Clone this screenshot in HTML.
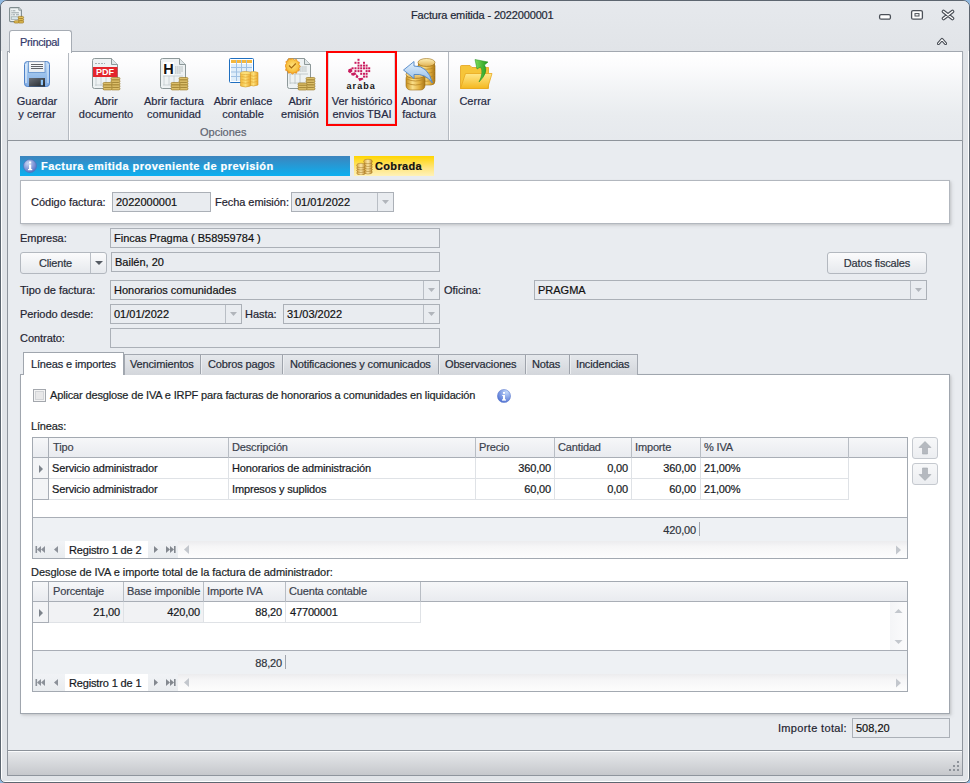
<!DOCTYPE html>
<html><head><meta charset="utf-8">
<style>
*{box-sizing:border-box;margin:0;padding:0}
html,body{width:970px;height:783px;overflow:hidden;background:#8fb8e0}
body{position:relative;font-family:"Liberation Sans",sans-serif;font-size:11px;color:#1f2329;-webkit-text-stroke:0.2px currentColor}
.a{position:absolute}
.t{position:absolute;white-space:nowrap;line-height:13px;letter-spacing:-0.15px}
.inp{position:absolute;border:1px solid #abb0b7;background:#e9ecf0}
.inp .v{position:absolute;left:3px;top:3px;white-space:nowrap;line-height:13px;color:#111}
.dd{position:absolute;top:0;bottom:0;right:0;width:16px;border-left:1px solid #b9bec5}
.dd:after{content:"";position:absolute;left:4px;top:7px;width:7px;height:4px;background:#b1b5bb;clip-path:polygon(0 0,100% 0,50% 100%)}
.btn{position:absolute;border:1px solid #b3b8bf;border-radius:3px;background:linear-gradient(#fbfbfc,#e6e9ed)}
.lbl{color:#1f2430;letter-spacing:-0.05px}
.rb{position:absolute;text-align:center;color:#262a44;line-height:13px;white-space:nowrap;padding-top:1px}
.sep{position:absolute;width:1px;background:#b4b9c0;box-shadow:1px 0 0 #fbfbfc}
.grid{position:absolute;border:1px solid #a3a9b1;background:#fff}
.gh{position:absolute;background:linear-gradient(#f6f7f9,#e9ebef);border-bottom:1px solid #a9aeb6}
.vl{position:absolute;width:1px}
.gt{color:#3b424d}
.gc{color:#15181d}
.r{text-align:right}
.hl{position:absolute;height:1px}
</style></head>
<body>
<!-- window outer border -->
<div class="a" style="left:0;top:0;width:970px;height:783px;border:1px solid #5d6670;border-radius:7px 7px 5px 5px;background:#e1e4e8;box-shadow:inset 1px 1px 0 #fff,inset -1px -1px 0 #fff"></div>
<!-- title bar -->
<div class="a" style="left:1px;top:1px;width:968px;height:50px;border-radius:6px 6px 0 0;background:linear-gradient(#e6e9ed,#e1e4e8)"></div>
<div class="t" style="left:411px;top:9px;color:#1d2736">Factura emitida - 2022000001</div>

<!-- ribbon tab -->
<div class="a" style="left:9px;top:30px;width:63px;height:23px;border:1px solid #a6acb4;border-bottom:none;border-radius:3px 3px 0 0;background:#fff;z-index:2"></div>
<div class="t" style="left:20px;top:36px;color:#343a6a;z-index:3;letter-spacing:-0.35px">Principal</div>

<!-- ribbon panel -->
<div class="a" style="left:7px;top:51px;width:956px;height:90px;border:1px solid #a2a8b0;border-bottom-color:#8e949b;background:linear-gradient(#ffffff 0%,#fcfcfd 15%,#f1f3f5 45%,#e9ecef 72%,#e6e9ed 100%);box-shadow:0 1px 1px rgba(0,0,0,0.08)"></div>


<!-- title icon -->
<svg class="a" style="left:9px;top:7px" width="16" height="18" viewBox="0 0 16 18">
<path d="M0.6 1.6Q0.6 0.6 1.6 0.6H9.8L12.4 3.2V13.8Q12.4 14.6 11.6 14.6H1.6Q0.6 14.6 0.6 13.6Z" fill="#eef3f3" stroke="#7f8c8e" stroke-width="1.1"/>
<path d="M9.8 0.6V3.2H12.4" fill="#d8e0e2" stroke="#7f8c8e" stroke-width="0.8"/>
<path d="M2.3 3.8h1M3.8 3.8h2.6M2.3 5.8h7.6M2.3 7.8h1M3.8 7.8h2.2M7 7.8h3" stroke="#8d999c" stroke-width="0.9"/>
<rect x="2.2" y="9.8" width="7.2" height="2.6" fill="#d8e6ea" stroke="#8d999c" stroke-width="0.6"/>
<g fill="#e2c05a" stroke="#9c7418" stroke-width="0.7"><rect x="9.2" y="9.4" width="5.4" height="2.2" rx="1.1"/><rect x="9.2" y="11.6" width="5.4" height="2.2" rx="1.1"/><rect x="9.2" y="13.8" width="5.4" height="2.2" rx="1.1"/><rect x="5" y="13.8" width="5" height="2.2" rx="1.1"/></g>
</svg>
<!-- window buttons -->
<svg class="a" style="left:878px;top:13px" width="14" height="8" viewBox="0 0 14 8"><rect x="1.6" y="1.6" width="10.8" height="4.6" rx="1.5" fill="#fff" stroke="#4b5058" stroke-width="1.3"/></svg>
<svg class="a" style="left:910px;top:9px" width="14" height="12" viewBox="0 0 14 12"><rect x="1.6" y="1.6" width="10.8" height="8.6" rx="1.5" fill="#fff" stroke="#4b5058" stroke-width="1.3"/><rect x="5" y="4.6" width="4" height="2.4" fill="#fff" stroke="#4b5058" stroke-width="1"/></svg>
<svg class="a" style="left:941px;top:9px" width="14" height="12" viewBox="0 0 14 12"><path d="M2.5 2.5L11.5 9.5M11.5 2.5L2.5 9.5" stroke="#4b5058" stroke-width="3.6" stroke-linecap="round"/><path d="M2.5 2.5L11.5 9.5M11.5 2.5L2.5 9.5" stroke="#fff" stroke-width="1.4" stroke-linecap="round"/></svg>
<svg class="a" style="left:937px;top:37px" width="10" height="8" viewBox="0 0 10 8"><path d="M1.5 6.5L5 2.5L8.5 6.5" fill="none" stroke="#4b5058" stroke-width="3.2" stroke-linejoin="round" stroke-linecap="round"/><path d="M1.5 6.5L5 2.5L8.5 6.5" fill="none" stroke="#fff" stroke-width="1.1" stroke-linecap="round"/></svg>

<!-- ribbon separators -->
<div class="sep" style="left:68px;top:52px;height:88px"></div>
<div class="sep" style="left:448px;top:52px;height:88px"></div>

<!-- save icon -->
<svg class="a" style="left:24px;top:61px" width="27" height="27" viewBox="0 0 27 27">
<defs><linearGradient id="gs" x1="0" x2="0" y1="0" y2="1"><stop offset="0" stop-color="#c4dcf6"/><stop offset="0.5" stop-color="#9cc2ec"/><stop offset="1" stop-color="#80ace4"/></linearGradient>
<linearGradient id="gd" x1="0" x2="1" y1="0" y2="1"><stop offset="0" stop-color="#6a717a"/><stop offset="1" stop-color="#22262b"/></linearGradient>
<linearGradient id="gl" x1="0" x2="0" y1="0" y2="1"><stop offset="0" stop-color="#ffffff"/><stop offset="1" stop-color="#e4eaf0"/></linearGradient></defs>
<rect x="0.5" y="0.5" width="25" height="25" rx="3" fill="url(#gs)" stroke="#4f82c8"/>
<path d="M2 3v19" stroke="#e8f2fc" stroke-width="1.2"/><path d="M24 3v19" stroke="#d8e8f8" stroke-width="1"/>
<rect x="4.5" y="0.5" width="16.5" height="11" fill="url(#gl)" stroke="#5f8fcc" stroke-width="0.8"/>
<path d="M4.6 0.7h16.3" stroke="#9a9ea4" stroke-width="0.8"/>
<path d="M7 3.5h12M7 5.5h12M7 7.5h12" stroke="#505459" stroke-width="0.9"/>
<rect x="5" y="17" width="16" height="8.6" fill="url(#gd)"/>
<rect x="16.8" y="18.8" width="2.2" height="5.4" fill="#8ec4f6"/>
</svg>
<div class="rb" style="left:7px;top:94px;width:60px">Guardar<br>y cerrar</div>

<!-- pdf icon -->
<svg class="a" style="left:92px;top:58px" width="29" height="33" viewBox="0 0 29 33">
<path d="M0.5 2.5Q0.5 0.5 2.5 0.5H19.5L25.5 6.5V28.5Q25.5 30.5 23.5 30.5H2.5Q0.5 30.5 0.5 28.5Z" fill="#eef2f3" stroke="#8d9899"/>
<path d="M19.5 0.5V6.5H25.5" fill="#dfe6e8" stroke="#8d9899"/>
<path d="M3 5.5h10" stroke="#a8b1b3" stroke-dasharray="2 1"/>
<rect x="1" y="9" width="24.5" height="10" fill="#e4252b"/>
<text x="13" y="17.3" font-family="Liberation Sans" font-weight="bold" font-size="9" fill="#fff" text-anchor="middle">PDF</text>
<path d="M4 19v9M9 19v9M14 19v9M3 27h20" stroke="#c3ccce" stroke-width="0.8"/>
<g fill="#dcbf6a" stroke="#9a7a2a" stroke-width="0.7"><rect x="19" y="19.5" width="9" height="2.4" rx="1.2"/><rect x="19" y="22" width="9" height="2.4" rx="1.2"/><rect x="19" y="24.5" width="9" height="2.4" rx="1.2"/><rect x="19" y="27" width="9" height="2.4" rx="1.2"/><rect x="19" y="29.5" width="9" height="2.4" rx="1.2"/><rect x="11" y="24.5" width="9" height="2.4" rx="1.2"/><rect x="11" y="27" width="9" height="2.4" rx="1.2"/><rect x="11" y="29.5" width="9" height="2.4" rx="1.2"/></g>
</svg>
<div class="rb" style="left:76px;top:94px;width:60px">Abrir<br>documento</div>

<!-- H icon -->
<svg class="a" style="left:160px;top:58px" width="29" height="33" viewBox="0 0 29 33">
<path d="M0.5 2.5Q0.5 0.5 2.5 0.5H19.5L25.5 6.5V28.5Q25.5 30.5 23.5 30.5H2.5Q0.5 30.5 0.5 28.5Z" fill="#eef2f3" stroke="#8d9899"/>
<path d="M19.5 0.5V6.5H25.5" fill="#dfe6e8" stroke="#8d9899"/>
<rect x="3" y="4" width="11" height="13" fill="#fff"/>
<text x="8.5" y="16" font-family="Liberation Sans" font-weight="bold" font-size="14.5" fill="#111" text-anchor="middle">H</text>
<path d="M15 9h8M15 11h8M15 13h8M15 15h6" stroke="#9aa4a6" stroke-width="0.8" stroke-dasharray="1.5 0.6"/>
<path d="M3 18h20M4 18v9M9 18v9M14 18v9M3 27h18" stroke="#c3ccce" stroke-width="0.8"/>
<g fill="#dcbf6a" stroke="#9a7a2a" stroke-width="0.7"><rect x="19" y="19.5" width="9" height="2.4" rx="1.2"/><rect x="19" y="22" width="9" height="2.4" rx="1.2"/><rect x="19" y="24.5" width="9" height="2.4" rx="1.2"/><rect x="19" y="27" width="9" height="2.4" rx="1.2"/><rect x="19" y="29.5" width="9" height="2.4" rx="1.2"/><rect x="11" y="24.5" width="9" height="2.4" rx="1.2"/><rect x="11" y="27" width="9" height="2.4" rx="1.2"/><rect x="11" y="29.5" width="9" height="2.4" rx="1.2"/></g>
</svg>
<div class="rb" style="left:139px;top:94px;width:70px">Abrir factura<br>comunidad</div>

<!-- table icon -->
<svg class="a" style="left:229px;top:58px" width="31" height="31" viewBox="0 0 31 31">
<rect x="0.5" y="0.5" width="24" height="24" rx="1" fill="#fff" stroke="#1f6fc0"/>
<rect x="2" y="2" width="21" height="3" fill="#f4b73c"/>
<path d="M2 6h21v17H2z" fill="#dfeefa"/>
<path d="M2 9.5h21M2 14h21M2 18.5h21M7.5 2v21M12.5 2v21M17.5 2v21" stroke="#9fc1e3" stroke-width="1"/>
<defs><linearGradient id="gc" x1="0" x2="1"><stop offset="0" stop-color="#f0b838"/><stop offset="0.5" stop-color="#fde07a"/><stop offset="1" stop-color="#e9a72c"/></linearGradient></defs>
<path d="M20 14.5Q24.5 12.5 29 14.5V27Q24.5 29 20 27Z" fill="url(#gc)" stroke="#d29a2a" stroke-width="0.6"/>
<path d="M21 17.5Q24.5 19 28 17.5M21 20.5Q24.5 22 28 20.5M21 23.5Q24.5 25 28 23.5" fill="none" stroke="#e4a730" stroke-width="0.7"/>
<path d="M11.5 15Q16.5 13 21.5 15V28Q16.5 30 11.5 28Z" fill="url(#gc)" stroke="#d29a2a" stroke-width="0.6"/>
<ellipse cx="16.5" cy="15" rx="5" ry="1.6" fill="#fde07a" stroke="#d29a2a" stroke-width="0.5"/>
<path d="M12.5 18.5Q16.5 20 20.5 18.5M12.5 21.5Q16.5 23 20.5 21.5M12.5 24.5Q16.5 26 20.5 24.5" fill="none" stroke="#e4a730" stroke-width="0.7"/>
</svg>
<div class="rb" style="left:208px;top:94px;width:70px">Abrir enlace<br>contable</div>

<!-- seal doc icon -->
<svg class="a" style="left:285px;top:58px" width="31" height="33" viewBox="0 0 31 33">
<path d="M2.5 2.5Q2.5 0.5 4.5 0.5H19.5L25.5 6.5V28.5Q25.5 30.5 23.5 30.5H4.5Q2.5 30.5 2.5 28.5Z" fill="#eef2f3" stroke="#8d9899"/>
<path d="M19.5 0.5V6.5H25.5" fill="#dfe6e8" stroke="#8d9899"/>
<path d="M13 9h9M13 11h9M13 13h9" stroke="#9aa4a6" stroke-width="0.8" stroke-dasharray="1.5 0.6"/>
<path d="M5 16h18M5 16v10M10 16v10M15 16v10M5 25h15" stroke="#b8c1c3" stroke-width="0.8"/>
<defs><radialGradient id="gse" cx="0.5" cy="0.45" r="0.55"><stop offset="0" stop-color="#ffe27a"/><stop offset="0.7" stop-color="#f8c040"/><stop offset="1" stop-color="#ee9a18"/></radialGradient></defs><path d="M7.5 0.5l1.8 1.4 2.2-.5.8 2.1 2.1.8-.5 2.2 1.4 1.8-1.4 1.8.5 2.2-2.1.8-.8 2.1-2.2-.5-1.8 1.4-1.8-1.4-2.2.5-.8-2.1-2.1-.8.5-2.2L0 7.5l1.4-1.8-.5-2.2 2.1-.8.8-2.1 2.2.5z" fill="url(#gse)" stroke="#e88a10" stroke-width="0.7"/>
<path d="M4 7.5l2.4 2.4 4.4-4.4" fill="none" stroke="#a86a10" stroke-width="1.1"/>
<g fill="#dcbf6a" stroke="#9a7a2a" stroke-width="0.7"><rect x="21" y="19.5" width="9" height="2.4" rx="1.2"/><rect x="21" y="22" width="9" height="2.4" rx="1.2"/><rect x="21" y="24.5" width="9" height="2.4" rx="1.2"/><rect x="21" y="27" width="9" height="2.4" rx="1.2"/><rect x="21" y="29.5" width="9" height="2.4" rx="1.2"/><rect x="13" y="25" width="9" height="2.4" rx="1.2"/><rect x="13" y="27.3" width="9" height="2.4" rx="1.2"/><rect x="13" y="29.6" width="9" height="2.4" rx="1.2"/></g>
</svg>
<div class="rb" style="left:270px;top:94px;width:60px">Abrir<br>emisión</div>

<!-- TBAI red box -->
<div class="a" style="left:326px;top:51px;width:71px;height:75px;border:2px solid #ff0000"></div>
<div class="a" style="left:328px;top:53px;width:67px;height:71px;border:1px solid #d4d8dd;border-top:none"></div>

<svg class="a" style="left:340px;top:56px" width="40" height="36" viewBox="0 0 40 36">
<g fill="#c91c5e" transform="translate(-1,0.8)">
<rect x="18.5" y="2" width="2" height="2"/>
<rect x="15.5" y="5" width="2" height="2"/><rect x="18.5" y="5" width="2" height="2"/><rect x="24" y="5" width="2" height="2"/>
<rect x="18.5" y="7.8" width="2" height="2"/><rect x="21.2" y="7.8" width="2" height="2"/><rect x="24" y="7.8" width="2" height="2"/><rect x="26.6" y="7.8" width="2" height="2"/>
<rect x="12.6" y="10.5" width="2" height="2"/><rect x="15.5" y="10.5" width="2" height="2"/><rect x="18.5" y="10.5" width="2" height="2"/><rect x="21.2" y="10.5" width="2" height="2"/><rect x="24" y="10.5" width="2" height="2"/><rect x="26.6" y="10.5" width="2" height="2"/><rect x="29.2" y="10.5" width="2" height="2"/>
<rect x="15.5" y="13.3" width="2" height="2"/><rect x="18.5" y="13.3" width="2" height="2"/><rect x="21.2" y="13.3" width="2" height="2"/><rect x="26.6" y="13.3" width="2" height="2"/><rect x="29.2" y="13.3" width="2" height="2"/>
<rect x="21.2" y="16" width="2" height="2"/><rect x="24" y="16" width="2" height="2"/><rect x="26.6" y="16" width="2" height="2"/>
<rect x="24" y="18.8" width="2" height="2"/><rect x="26.6" y="18.8" width="2" height="2"/>
<path d="M9.5 12.5L12.5 11.5L13.5 14.5L11 16.5L9 15Z"/>
<path d="M12 16.5L16 15.5L17.5 17.5L14.5 19L12.5 18.5Z"/>
<path d="M17.5 17.5L19.5 19.5L18.5 21.5L16.5 20.5Z"/>
<path d="M19 21.5L23.5 21L24.5 22.5L20.5 24.5Z"/>
</g>
<text x="21.2" y="33" font-family="Liberation Sans" font-weight="bold" font-size="9" fill="#151515" text-anchor="middle" letter-spacing="1.1">araba</text>
</svg>
<div class="rb" style="left:328px;top:94px;width:68px">Ver histórico<br>envios TBAI</div>

<!-- abonar icon -->
<svg class="a" style="left:403px;top:57px" width="34" height="34" viewBox="0 0 34 34">
<defs><linearGradient id="gg" x1="0" x2="1" y1="0" y2="0"><stop offset="0" stop-color="#c8901c"/><stop offset="0.35" stop-color="#fbe08a"/><stop offset="0.7" stop-color="#e2b040"/><stop offset="1" stop-color="#a87414"/></linearGradient>
<linearGradient id="gt" x1="0" x2="0" y1="0" y2="1"><stop offset="0" stop-color="#fff2b8"/><stop offset="1" stop-color="#e0b050"/></linearGradient>
<linearGradient id="ga" x1="0" x2="0" y1="0" y2="1"><stop offset="0" stop-color="#e6f2fd"/><stop offset="1" stop-color="#8ab8e8"/></linearGradient></defs>
<g stroke="#9a6c14" stroke-width="0.6">
<rect x="15" y="5" width="17" height="23" rx="4" fill="url(#gg)"/>
<ellipse cx="23.5" cy="5.5" rx="8.5" ry="4" fill="url(#gt)"/>
<path d="M15.5 10.5Q23.5 14 31.5 10.5M15.5 14.5Q23.5 18 31.5 14.5M15.5 18.5Q23.5 22 31.5 18.5M15.5 22.5Q23.5 26 31.5 22.5" fill="none" stroke="#b78628" stroke-width="0.8"/>
<rect x="3" y="17" width="19" height="16" rx="4.5" fill="url(#gg)"/>
<ellipse cx="12.5" cy="17.5" rx="9.5" ry="4" fill="url(#gt)"/>
<path d="M3.5 22Q12.5 26 21.5 22M3.5 26Q12.5 30 21.5 26" fill="none" stroke="#b78628" stroke-width="0.8"/>
</g>
<path d="M0.5 13L11 4.5V9Q25 8.5 29.5 26Q22 16 11 17.5V21.5Z" fill="url(#ga)" stroke="#4f86c6" stroke-width="0.9" stroke-linejoin="round"/>
</svg>
<div class="rb" style="left:389px;top:94px;width:60px">Abonar<br>factura</div>

<!-- cerrar icon -->
<svg class="a" style="left:460px;top:58px" width="33" height="33" viewBox="0 0 33 33">
<defs><linearGradient id="gf" x1="0" x2="0" y1="0" y2="1"><stop offset="0" stop-color="#ffe88a"/><stop offset="1" stop-color="#f4b820"/></linearGradient>
<linearGradient id="gr" x1="0" x2="1"><stop offset="0" stop-color="#7fdc5a"/><stop offset="1" stop-color="#1e9a1e"/></linearGradient></defs>
<path d="M0.5 8.5Q0.5 7.5 1.5 7.5H10L12 9.5H28.5V30.5H0.5Z" fill="#f6c53a" stroke="#e5a21a" stroke-width="0.8"/>
<path d="M0.5 30.5L5.5 15.5H32L27.5 30.5Z" fill="url(#gf)" stroke="#e8a81e" stroke-width="0.8"/>
<path d="M15 1.5L28 4L24.5 7Q29 14 19 24Q24 14 20.5 9L17 11Z" fill="url(#gr)" stroke="#1a8a1a" stroke-width="0.5"/>
</svg>
<div class="rb" style="left:445px;top:94px;width:60px">Cerrar</div>

<div class="rb" style="left:200px;top:125px;width:46px;color:#5e6470">Opciones</div>

<!-- content area -->
<div class="a" style="left:7px;top:141px;width:956px;height:635px;border:1px solid #8f959d;border-top:none;background:#e9ecf0"></div>

<!-- status bar -->
<div class="a" style="left:8px;top:750px;width:954px;height:25px;border-top:1px solid #8c929a;background:linear-gradient(#e6e8eb,#c6c8cc);box-shadow:inset 0 1px 0 #fafbfc"></div>
<!-- info bar -->
<div class="a" style="left:20px;top:156px;width:330px;height:20px;background:linear-gradient(#3d84bd,#0cb0f0)"></div>
<svg class="a" style="left:23px;top:159px" width="14" height="14" viewBox="0 0 14 14"><defs><radialGradient id="gi" cx="0.35" cy="0.3" r="0.8"><stop offset="0" stop-color="#c9d6f5"/><stop offset="1" stop-color="#4c68c0"/></radialGradient></defs><circle cx="7" cy="7" r="6.5" fill="url(#gi)" stroke="#5670b8" stroke-width="0.6"/><rect x="6" y="5.5" width="2.2" height="5.5" fill="#fff"/><rect x="6" y="2.5" width="2.2" height="2" fill="#fff"/><rect x="5" y="10" width="4.2" height="1.2" fill="#fff"/></svg>
<div class="t" style="left:41px;top:160px;font-size:11px;font-weight:bold;color:#fff;letter-spacing:0.45px">Factura emitida proveniente de previsión</div>
<div class="a" style="left:354px;top:156px;width:80px;height:20px;background:linear-gradient(#ffd500,#ffe680 60%,#fff2b8)"></div>
<svg class="a" style="left:356px;top:158px" width="17" height="17" viewBox="0 0 17 17"><defs><linearGradient id="gk" x1="0" x2="1"><stop offset="0" stop-color="#d9a640"/><stop offset="0.5" stop-color="#fbe6a8"/><stop offset="1" stop-color="#c08a2a"/></linearGradient></defs>
<g fill="url(#gk)" stroke="#9c7020" stroke-width="0.5"><ellipse cx="12" cy="14" rx="4.3" ry="2"/><ellipse cx="12" cy="11.5" rx="4.3" ry="2"/><ellipse cx="12" cy="9" rx="4.3" ry="2"/><ellipse cx="12" cy="6.5" rx="4.3" ry="2"/><ellipse cx="12" cy="3.5" rx="4.3" ry="2.2"/><ellipse cx="5" cy="15" rx="4.3" ry="2"/><ellipse cx="5" cy="12.5" rx="4.3" ry="2"/><ellipse cx="5" cy="10" rx="4.3" ry="2"/><ellipse cx="5" cy="7.5" rx="4.3" ry="2.2"/></g></svg>
<div class="t" style="left:375px;top:160px;font-size:11px;font-weight:bold;color:#111;letter-spacing:0.35px">Cobrada</div>

<!-- white box -->
<div class="a" style="left:20px;top:180px;width:930px;height:44px;border:1px solid #b2b7be;background:#fff;box-shadow:1px 1px 2px rgba(0,0,0,0.1),2px 2px 4px rgba(0,0,0,0.08)"></div>
<div class="t lbl" style="left:31px;top:196px;letter-spacing:0">Código factura:</div>
<div class="inp" style="left:112px;top:192px;width:99px;height:20px"><span class="v">2022000001</span></div>
<div class="t lbl" style="left:215px;top:196px">Fecha emisión:</div>
<div class="inp" style="left:291px;top:192px;width:103px;height:20px"><span class="v">01/01/2022</span><div class="dd"></div></div>

<!-- form rows -->
<div class="t lbl" style="left:20px;top:232px">Empresa:</div>
<div class="inp" style="left:110px;top:228px;width:330px;height:20px"><span class="v">Fincas Pragma ( B58959784 )</span></div>

<div class="btn" style="left:20px;top:252px;width:87px;height:22px"><div class="t" style="left:0;width:69px;top:4px;text-align:center;color:#2e3440">Cliente</div><div class="a" style="left:69px;top:0;bottom:0;width:1px;background:#b9bec5"></div><div class="a" style="left:74px;top:8px;border-left:4px solid transparent;border-right:4px solid transparent;border-top:4px solid #555b63"></div></div>
<div class="inp" style="left:111px;top:252px;width:329px;height:20px"><span class="v">Bailén, 20</span></div>
<div class="btn" style="left:827px;top:252px;width:100px;height:22px"><div class="t" style="left:0;width:98px;top:4px;text-align:center;color:#2e3440">Datos fiscales</div></div>

<div class="t lbl" style="left:20px;top:284px">Tipo de factura:</div>
<div class="inp" style="left:110px;top:280px;width:330px;height:20px"><span class="v">Honorarios comunidades</span><div class="dd"></div></div>
<div class="t lbl" style="left:444px;top:284px">Oficina:</div>
<div class="inp" style="left:534px;top:280px;width:393px;height:20px"><span class="v">PRAGMA</span><div class="dd"></div></div>

<div class="t lbl" style="left:20px;top:308px">Periodo desde:</div>
<div class="inp" style="left:110px;top:304px;width:132px;height:20px"><span class="v">01/01/2022</span><div class="dd"></div></div>
<div class="t lbl" style="left:245px;top:308px">Hasta:</div>
<div class="inp" style="left:283px;top:304px;width:157px;height:20px"><span class="v">31/03/2022</span><div class="dd"></div></div>

<div class="t lbl" style="left:20px;top:332px">Contrato:</div>
<div class="inp" style="left:110px;top:328px;width:330px;height:20px"></div>


<!-- tabs -->
<div class="a" style="left:20px;top:374px;width:930px;height:340px;border:1px solid #a0a6ae;background:#fff;box-shadow:1px 1px 2px rgba(0,0,0,0.1),2px 2px 4px rgba(0,0,0,0.08)"></div>
<div class="a" style="left:124px;top:354px;width:514px;height:21px;border:1px solid #a3a8b0;border-bottom:none;background:linear-gradient(#e5e8ec,#d3d6db)"></div>
<div class="vl" style="left:200px;top:355px;height:19px;background:#9ea3ab;box-shadow:1px 0 0 #eceef1"></div>
<div class="vl" style="left:282px;top:355px;height:19px;background:#9ea3ab;box-shadow:1px 0 0 #eceef1"></div>
<div class="vl" style="left:438px;top:355px;height:19px;background:#9ea3ab;box-shadow:1px 0 0 #eceef1"></div>
<div class="vl" style="left:525px;top:355px;height:19px;background:#9ea3ab;box-shadow:1px 0 0 #eceef1"></div>
<div class="vl" style="left:569px;top:355px;height:19px;background:#9ea3ab;box-shadow:1px 0 0 #eceef1"></div>
<div class="a" style="left:23px;top:352px;width:101px;height:23px;border:1px solid #a0a6ae;border-bottom:none;background:#fff"></div>
<div class="t" style="left:31px;top:358px;color:#222834">Líneas e importes</div>
<div class="t" style="left:130px;top:358px;color:#262c38">Vencimientos</div>
<div class="t" style="left:208px;top:358px;color:#262c38">Cobros pagos</div>
<div class="t" style="left:290px;top:358px;color:#262c38">Notificaciones y comunicados</div>
<div class="t" style="left:445px;top:358px;color:#262c38">Observaciones</div>
<div class="t" style="left:532px;top:358px;color:#262c38">Notas</div>
<div class="t" style="left:576px;top:358px;color:#262c38">Incidencias</div>

<!-- checkbox -->
<div class="a" style="left:33px;top:389px;width:13px;height:13px;border:1px solid #a3a7ad;background:#f4f4f4"><div class="a" style="left:1px;top:1px;width:9px;height:9px;border:1px solid #d2d4d7;background:#e8e8e9"></div></div>
<div class="t" style="left:50px;top:389px;color:#1b1f27">Aplicar desglose de IVA e IRPF para facturas de honorarios a comunidades en liquidación</div>
<svg class="a" style="left:497px;top:389px" width="14" height="14" viewBox="0 0 14 14"><defs><radialGradient id="gi2" cx="0.7" cy="0.2" r="0.9"><stop offset="0" stop-color="#c2d8fb"/><stop offset="1" stop-color="#4a6cd0"/></radialGradient></defs><circle cx="7" cy="7" r="6.6" fill="url(#gi2)" stroke="#5a78cc" stroke-width="0.5"/><rect x="6" y="6" width="2" height="5" fill="#fff"/><rect x="6" y="3" width="2" height="1.8" fill="#fff"/><rect x="5" y="10.3" width="4" height="1.3" fill="#fff"/><rect x="5.2" y="6" width="1" height="1" fill="#fff"/></svg>

<div class="t" style="left:31px;top:420px;color:#1b1f27">Líneas:</div>

<!-- grid 1 -->
<div class="grid" style="left:32px;top:437px;width:876px;height:122px"></div>
<div class="gh" style="left:33px;top:438px;width:874px;height:20px"></div>
<div class="a" style="left:33px;top:458px;width:15px;height:42px;background:#f3f4f6"></div>
<div class="vl" style="left:48px;top:438px;height:62px;background:#a9aeb6"></div>
<div class="hl" style="left:33px;top:478px;width:15px;background:#a9aeb6"></div>
<div class="hl" style="left:33px;top:499px;width:15px;background:#a9aeb6"></div>
<div class="hl" style="left:49px;top:478px;width:800px;background:#dfe2e6"></div>
<div class="hl" style="left:49px;top:499px;width:800px;background:#dfe2e6"></div>
<div class="vl" style="left:228px;top:438px;height:20px;background:#b8bdc4"></div>
<div class="vl" style="left:475px;top:438px;height:20px;background:#b8bdc4"></div>
<div class="vl" style="left:554px;top:438px;height:20px;background:#b8bdc4"></div>
<div class="vl" style="left:631px;top:438px;height:20px;background:#b8bdc4"></div>
<div class="vl" style="left:700px;top:438px;height:20px;background:#b8bdc4"></div>
<div class="vl" style="left:848px;top:438px;height:20px;background:#b8bdc4"></div>
<div class="vl" style="left:228px;top:458px;height:42px;background:#dfe2e6"></div>
<div class="vl" style="left:475px;top:458px;height:42px;background:#dfe2e6"></div>
<div class="vl" style="left:554px;top:458px;height:42px;background:#dfe2e6"></div>
<div class="vl" style="left:631px;top:458px;height:42px;background:#dfe2e6"></div>
<div class="vl" style="left:700px;top:458px;height:42px;background:#dfe2e6"></div>
<div class="vl" style="left:848px;top:458px;height:42px;background:#dfe2e6"></div>
<div class="a" style="left:39px;top:465px;border-top:4px solid transparent;border-bottom:4px solid transparent;border-left:4px solid #7d838b"></div>
<div class="t gt" style="left:53px;top:441px">Tipo</div>
<div class="t gt" style="left:232px;top:441px">Descripción</div>
<div class="t gt" style="left:479px;top:441px">Precio</div>
<div class="t gt" style="left:558px;top:441px">Cantidad</div>
<div class="t gt" style="left:635px;top:441px">Importe</div>
<div class="t gt" style="left:704px;top:441px">% IVA</div>
<div class="t gc" style="left:52px;top:462px">Servicio administrador</div>
<div class="t gc" style="left:232px;top:462px">Honorarios de administración</div>
<div class="t gc r" style="left:475px;width:76px;top:462px">360,00</div>
<div class="t gc r" style="left:554px;width:74px;top:462px">0,00</div>
<div class="t gc r" style="left:631px;width:65px;top:462px">360,00</div>
<div class="t gc" style="left:704px;top:462px">21,00%</div>
<div class="t gc" style="left:52px;top:483px">Servicio administrador</div>
<div class="t gc" style="left:232px;top:483px">Impresos y suplidos</div>
<div class="t gc r" style="left:475px;width:76px;top:483px">60,00</div>
<div class="t gc r" style="left:554px;width:74px;top:483px">0,00</div>
<div class="t gc r" style="left:631px;width:65px;top:483px">60,00</div>
<div class="t gc" style="left:704px;top:483px">21,00%</div>
<!-- footer -->
<div class="a" style="left:33px;top:517px;width:874px;height:24px;border-top:1px solid #a9aeb6;background:#eef1f4"></div>
<div class="a" style="left:33px;top:541px;width:874px;height:17px;background:linear-gradient(#ececee,#f6f6f7 35%,#fdfdfd)"></div>
<div class="t gc r" style="left:600px;width:96px;top:524px;color:#2f343c">420,00</div>
<div class="vl" style="left:699px;top:522px;height:14px;background:#a0a5ad"></div>
<div class="a" style="left:33px;top:541px;width:32px;height:17px;background:linear-gradient(#f1f3f6,#e9ecef)"></div>
<div class="a" style="left:148px;top:541px;width:30px;height:17px;background:linear-gradient(#f1f3f6,#e9ecef)"></div>
<div class="a" style="left:65px;top:541px;width:83px;height:17px;background:#fff"></div>
<div class="t gc" style="left:69px;top:544px">Registro 1 de 2</div>
<svg class="a" style="overflow:visible;left:35px;top:546px" width="160" height="8" viewBox="0 0 160 8">
<g fill="#8c9199"><rect x="0.5" y="0" width="1.6" height="7"/><path d="M2 3.5L6 0V7Z"/><path d="M6 3.5L10 0V7Z"/>
<path d="M19 3.5L23 0V7Z"/></g>
<g fill="#83888f"><path d="M119 0L123 3.5L119 7Z"/><path d="M131 0L135 3.5L131 7Z"/><path d="M135 0L139 3.5L135 7Z"/><rect x="139" y="0" width="1.6" height="7"/></g>
<path d="M149 3.5L154 -1V8Z" fill="#c3c7cd"/>
</svg>
<svg class="a" style="left:895px;top:545px" width="7" height="10" viewBox="0 0 7 10"><path d="M1 0.5L6 5L1 9.5Z" fill="#c3c7cd"/></svg>
<!-- up/down buttons -->
<div class="btn" style="left:912px;top:437px;width:26px;height:22px;border-color:#c5c9cf;background:linear-gradient(#f7f8f9,#eceef1)"></div>
<svg class="a" style="left:918px;top:441px" width="14" height="14" viewBox="0 0 14 14"><path d="M7 0.5L13 6.5H9.5V13H4.5V6.5H1Z" fill="#b5b9bf" stroke="#a3a8ae" stroke-width="0.6"/></svg>
<div class="btn" style="left:912px;top:463px;width:26px;height:22px;border-color:#c5c9cf;background:linear-gradient(#f7f8f9,#eceef1)"></div>
<svg class="a" style="left:918px;top:467px" width="14" height="14" viewBox="0 0 14 14"><path d="M7 13.5L13 7.5H9.5V1H4.5V7.5H1Z" fill="#b5b9bf" stroke="#a3a8ae" stroke-width="0.6"/></svg>

<div class="t" style="left:31px;top:566px;color:#1b1f27;letter-spacing:-0.05px">Desglose de IVA e importe total de la factura de administrador:</div>
<!-- grid 2 -->
<div class="grid" style="left:32px;top:581px;width:876px;height:111px"></div>
<div class="gh" style="left:33px;top:582px;width:874px;height:20px"></div>
<div class="a" style="left:33px;top:602px;width:15px;height:21px;background:#f3f4f6"></div>
<div class="a" style="left:49px;top:602px;width:154px;height:20px;background:#f1f2f4"></div>
<div class="vl" style="left:48px;top:582px;height:41px;background:#a9aeb6"></div>
<div class="hl" style="left:33px;top:622px;width:15px;background:#a9aeb6"></div>
<div class="hl" style="left:49px;top:622px;width:372px;background:#dfe2e6"></div>
<div class="vl" style="left:123px;top:582px;height:20px;background:#b8bdc4"></div>
<div class="vl" style="left:203px;top:582px;height:20px;background:#b8bdc4"></div>
<div class="vl" style="left:285px;top:582px;height:20px;background:#b8bdc4"></div>
<div class="vl" style="left:420px;top:582px;height:20px;background:#b8bdc4"></div>
<div class="vl" style="left:123px;top:602px;height:20px;background:#dfe2e6"></div>
<div class="vl" style="left:203px;top:602px;height:20px;background:#dfe2e6"></div>
<div class="vl" style="left:285px;top:602px;height:20px;background:#dfe2e6"></div>
<div class="vl" style="left:420px;top:602px;height:20px;background:#dfe2e6"></div>
<div class="a" style="left:39px;top:609px;border-top:4px solid transparent;border-bottom:4px solid transparent;border-left:4px solid #7d838b"></div>
<div class="t gt" style="left:53px;top:585px">Porcentaje</div>
<div class="t gt" style="left:127px;top:585px">Base imponible</div>
<div class="t gt" style="left:207px;top:585px">Importe IVA</div>
<div class="t gt" style="left:289px;top:585px">Cuenta contable</div>
<div class="t gc r" style="left:48px;width:72px;top:606px">21,00</div>
<div class="t gc r" style="left:123px;width:77px;top:606px">420,00</div>
<div class="t gc r" style="left:203px;width:79px;top:606px">88,20</div>
<div class="t gc" style="left:290px;top:606px">47700001</div>
<!-- vscroll -->
<div class="a" style="left:890px;top:602px;width:17px;height:48px;background:linear-gradient(90deg,#f4f5f7,#fbfbfc)"></div>
<svg class="a" style="left:894px;top:608px" width="9" height="6" viewBox="0 0 9 6"><path d="M0.5 5L4.5 1L8.5 5Z" fill="#c3c7cd"/></svg>
<svg class="a" style="left:894px;top:639px" width="9" height="6" viewBox="0 0 9 6"><path d="M0.5 1L4.5 5L8.5 1Z" fill="#c3c7cd"/></svg>
<!-- footer 2 -->
<div class="a" style="left:33px;top:650px;width:874px;height:24px;border-top:1px solid #a9aeb6;background:#eef1f4"></div>
<div class="a" style="left:33px;top:674px;width:874px;height:17px;background:linear-gradient(#ececee,#f6f6f7 35%,#fdfdfd)"></div>
<div class="t gc r" style="left:200px;width:82px;top:657px;color:#2f343c">88,20</div>
<div class="vl" style="left:285px;top:655px;height:14px;background:#a0a5ad"></div>
<div class="a" style="left:33px;top:674px;width:32px;height:17px;background:linear-gradient(#f1f3f6,#e9ecef)"></div>
<div class="a" style="left:148px;top:674px;width:30px;height:17px;background:linear-gradient(#f1f3f6,#e9ecef)"></div>
<div class="a" style="left:65px;top:674px;width:83px;height:17px;background:#fff"></div>
<div class="t gc" style="left:69px;top:677px">Registro 1 de 1</div>
<svg class="a" style="overflow:visible;left:35px;top:679px" width="160" height="8" viewBox="0 0 160 8">
<g fill="#8c9199"><rect x="0.5" y="0" width="1.6" height="7"/><path d="M2 3.5L6 0V7Z"/><path d="M6 3.5L10 0V7Z"/>
<path d="M19 3.5L23 0V7Z"/></g>
<g fill="#83888f"><path d="M119 0L123 3.5L119 7Z"/><path d="M131 0L135 3.5L131 7Z"/><path d="M135 0L139 3.5L135 7Z"/><rect x="139" y="0" width="1.6" height="7"/></g>
<path d="M149 3.5L154 -1V8Z" fill="#c3c7cd"/>
</svg>
<svg class="a" style="left:895px;top:678px" width="7" height="10" viewBox="0 0 7 10"><path d="M1 0.5L6 5L1 9.5Z" fill="#c3c7cd"/></svg>

<!-- importe total -->
<div class="t lbl" style="left:746px;width:101px;text-align:right;top:722px;letter-spacing:0.35px">Importe total:</div>
<div class="inp" style="left:852px;top:718px;width:98px;height:20px"><span class="v">508,20</span></div>
<!-- size grip -->
<svg class="a" style="left:949px;top:761px" width="12" height="12" viewBox="0 0 12 12"><g fill="#8e939a"><rect x="8" y="0" width="2" height="2"/><rect x="4" y="4" width="2" height="2"/><rect x="8" y="4" width="2" height="2"/><rect x="0" y="8" width="2" height="2"/><rect x="4" y="8" width="2" height="2"/><rect x="8" y="8" width="2" height="2"/></g></svg>




</body></html>
